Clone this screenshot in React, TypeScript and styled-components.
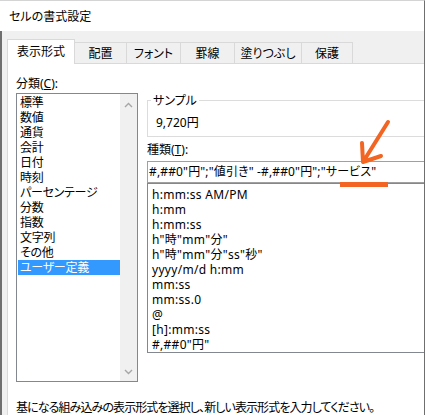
import React from "react";
import styled, { createGlobalStyle } from "styled-components";

const Global = createGlobalStyle`
  html, body { margin: 0; padding: 0; background: #ffffff; }
  body {
    width: 425px; height: 415px; overflow: hidden;
    font-family: "Noto Sans", "Noto Sans CJK JP", sans-serif;
    font-size: 12px; color: #000;
    font-feature-settings: "palt";
  }
  #root { width: 425px; height: 415px; }
`;

const Window = styled.div`
  position: relative;
  width: 425px;
  height: 415px;
  box-sizing: border-box;
  border-right: 1px solid #6f6f6f;
  border-top: 1px solid #d4d4d4;
  display: flex;
  flex-direction: column;
  overflow: hidden;
  background: #ffffff;
`;

const TitleBar = styled.div`
  height: 30px;
  flex: none;
  display: flex;
  align-items: center;
  padding-left: 9px;
  background: #ffffff;
  line-height: 15px;
`;

const Body = styled.div`
  flex: 1;
  min-height: 0;
  display: flex;
  flex-direction: column;
  background: #f0f0f0;
  border-left: 2px solid #6f6f6f;
  padding: 8px 0 0 5px;
`;

const TabRow = styled.div`
  display: flex;
  align-items: flex-end;
  height: 24px;
  flex: none;
`;

const Tab = styled.div<{ $w: number; $active?: boolean }>`
  box-sizing: border-box;
  width: ${(p) => p.$w}px;
  height: ${(p) => (p.$active ? 25 : 21)}px;
  margin-bottom: ${(p) => (p.$active ? -1 : 0)}px;
  position: relative;
  z-index: ${(p) => (p.$active ? 1 : 0)};
  background: ${(p) => (p.$active ? "#ffffff" : "#f0f0f0")};
  border-top: 1px solid #d9d9d9;
  border-right: 1px solid #d9d9d9;
  border-left: ${(p) => (p.$active ? "1px solid #d9d9d9" : "none")};
  display: flex;
  align-items: center;
  justify-content: center;
  padding-bottom: ${(p) => (p.$active ? 2 : 0)}px;
  line-height: 15px;
  white-space: nowrap;
`;

const Panel = styled.div`
  flex: 1;
  min-height: 0;
  background: #ffffff;
  border-top: 1px solid #d9d9d9;
  border-left: 1px solid #d9d9d9;
  padding: 12px 0 0 8px;
  overflow: hidden;
`;

const Columns = styled.div`
  display: grid;
  grid-template-columns: 122px 1fr;
  column-gap: 9px;
  align-items: start;
`;

const LeftCol = styled.div`
  display: flex;
  flex-direction: column;
`;

const RightCol = styled.div`
  display: flex;
  flex-direction: column;
  padding-top: 17px;
  min-width: 0;
`;

const Label = styled.div<{ $mt?: number }>`
  line-height: 15px;
  height: 15px;
  margin-top: ${(p) => p.$mt ?? 0}px;
  white-space: nowrap;
  u { text-decoration: underline; text-underline-offset: 1px; }
`;

const ListBox = styled.div`
  margin-top: 2px;
  box-sizing: border-box;
  height: 289px;
  border: 1px solid #828790;
  display: flex;
`;

const Items = styled.div`
  flex: 1;
  padding: 1px 0 0 1px;
  display: flex;
  flex-direction: column;
`;

const Item = styled.div<{ $selected?: boolean }>`
  height: 15px;
  line-height: 15px;
  padding-left: 2px;
  white-space: nowrap;
  letter-spacing: -0.3px;
  background: ${(p) => (p.$selected ? "#3399ff" : "transparent")};
  color: ${(p) => (p.$selected ? "#ffffff" : "#000000")};
`;

const ScrollBar = styled.div`
  width: 17px;
  flex: none;
  background: #f0f0f0;
  display: flex;
  flex-direction: column;
  justify-content: space-between;
  align-items: center;
  padding: 8px 0 6px;
`;

const Group = styled.fieldset`
  margin: 0;
  padding: 0;
  min-width: 0;
  border: 1px solid #dcdcdc;
  border-right: none;
`;

const Legend = styled.legend`
  padding: 0 2px;
  margin-left: 3px;
  line-height: 15px;
`;

const SampleValue = styled.div`
  padding: 7px 0 6px 8px;
  line-height: 15px;
`;

const Input = styled.div`
  margin-top: 4px;
  box-sizing: border-box;
  height: 22px;
  border: 1px solid #a0a0a0;
  border-right: none;
  padding-left: 1px;
  line-height: 20px;
  letter-spacing: 0.15px;
  white-space: nowrap;
`;

const FormatList = styled.div`
  box-sizing: border-box;
  height: 170px;
  border: 1px solid #828790;
  border-right: none;
  padding: 3px 0 0 4px;
  display: flex;
  flex-direction: column;
`;

const FormatItem = styled.div`
  height: 15px;
  line-height: 15px;
  letter-spacing: 0.3px;
  white-space: nowrap;
`;

const Hint = styled.div`
  margin-top: 18px;
  line-height: 15px;
  letter-spacing: -0.9px;
  white-space: nowrap;
`;

const Annotation = styled.svg`
  position: absolute;
  left: 330px;
  top: 110px;
  pointer-events: none;
`;

const Chevron = ({ down }: { down?: boolean }) => (
  <svg width="9" height="6" viewBox="0 0 9 6">
    <path
      d={down ? "M1 1 L4.5 4.5 L8 1" : "M1 5 L4.5 1.5 L8 5"}
      fill="none"
      stroke="#a6a6a6"
      strokeWidth="1.4"
    />
  </svg>
);

const categories = [
  "標準",
  "数値",
  "通貨",
  "会計",
  "日付",
  "時刻",
  "パーセンテージ",
  "分数",
  "指数",
  "文字列",
  "その他",
  "ユーザー定義",
];

const formats = [
  "h:mm:ss AM/PM",
  "h:mm",
  "h:mm:ss",
  'h"時"mm"分"',
  'h"時"mm"分"ss"秒"',
  "yyyy/m/d h:mm",
  "mm:ss",
  "mm:ss.0",
  "@",
  "[h]:mm:ss",
  '#,##0"円"',
];

const tabs: { label: string; w: number }[] = [
  { label: "表示形式", w: 68 },
  { label: "配置", w: 52 },
  { label: "フォント", w: 54 },
  { label: "罫線", w: 54 },
  { label: "塗りつぶし", w: 67 },
  { label: "保護", w: 51 },
];

export default function App() {
  return (
    <>
      <Global />
      <Window>
        <TitleBar>セルの書式設定</TitleBar>
        <Body>
          <TabRow>
            {tabs.map((t, i) => (
              <Tab key={t.label} $w={t.w} $active={i === 0}>
                {t.label}
              </Tab>
            ))}
          </TabRow>
          <Panel>
            <Columns>
              <LeftCol>
                <Label>
                  分類(<u>C</u>):
                </Label>
                <ListBox>
                  <Items>
                    {categories.map((c) => (
                      <Item key={c} $selected={c === "ユーザー定義"}>
                        {c}
                      </Item>
                    ))}
                  </Items>
                  <ScrollBar>
                    <Chevron />
                    <Chevron down />
                  </ScrollBar>
                </ListBox>
              </LeftCol>
              <RightCol>
                <Group>
                  <Legend>サンプル</Legend>
                  <SampleValue>9,720円</SampleValue>
                </Group>
                <Label $mt={5}>
                  種類(<u>T</u>):
                </Label>
                <Input>#,##0"円";"値引き" -#,##0"円";"サービス"</Input>
                <FormatList>
                  {formats.map((f) => (
                    <FormatItem key={f}>{f}</FormatItem>
                  ))}
                </FormatList>
              </RightCol>
            </Columns>
            <Hint>基になる組み込みの表示形式を選択し、新しい表示形式を入力してください。</Hint>
          </Panel>
        </Body>
        <Annotation width="70" height="80" viewBox="0 0 70 80">
          <path
            d="M58 11 L33 51 M32 32 L33 51 L51 45"
            fill="none"
            stroke="#f26522"
            strokeWidth="4"
            strokeLinecap="round"
            strokeLinejoin="round"
          />
          <rect x="10" y="71" width="48" height="5" fill="#f26522" />
        </Annotation>
      </Window>
    </>
  );
}
